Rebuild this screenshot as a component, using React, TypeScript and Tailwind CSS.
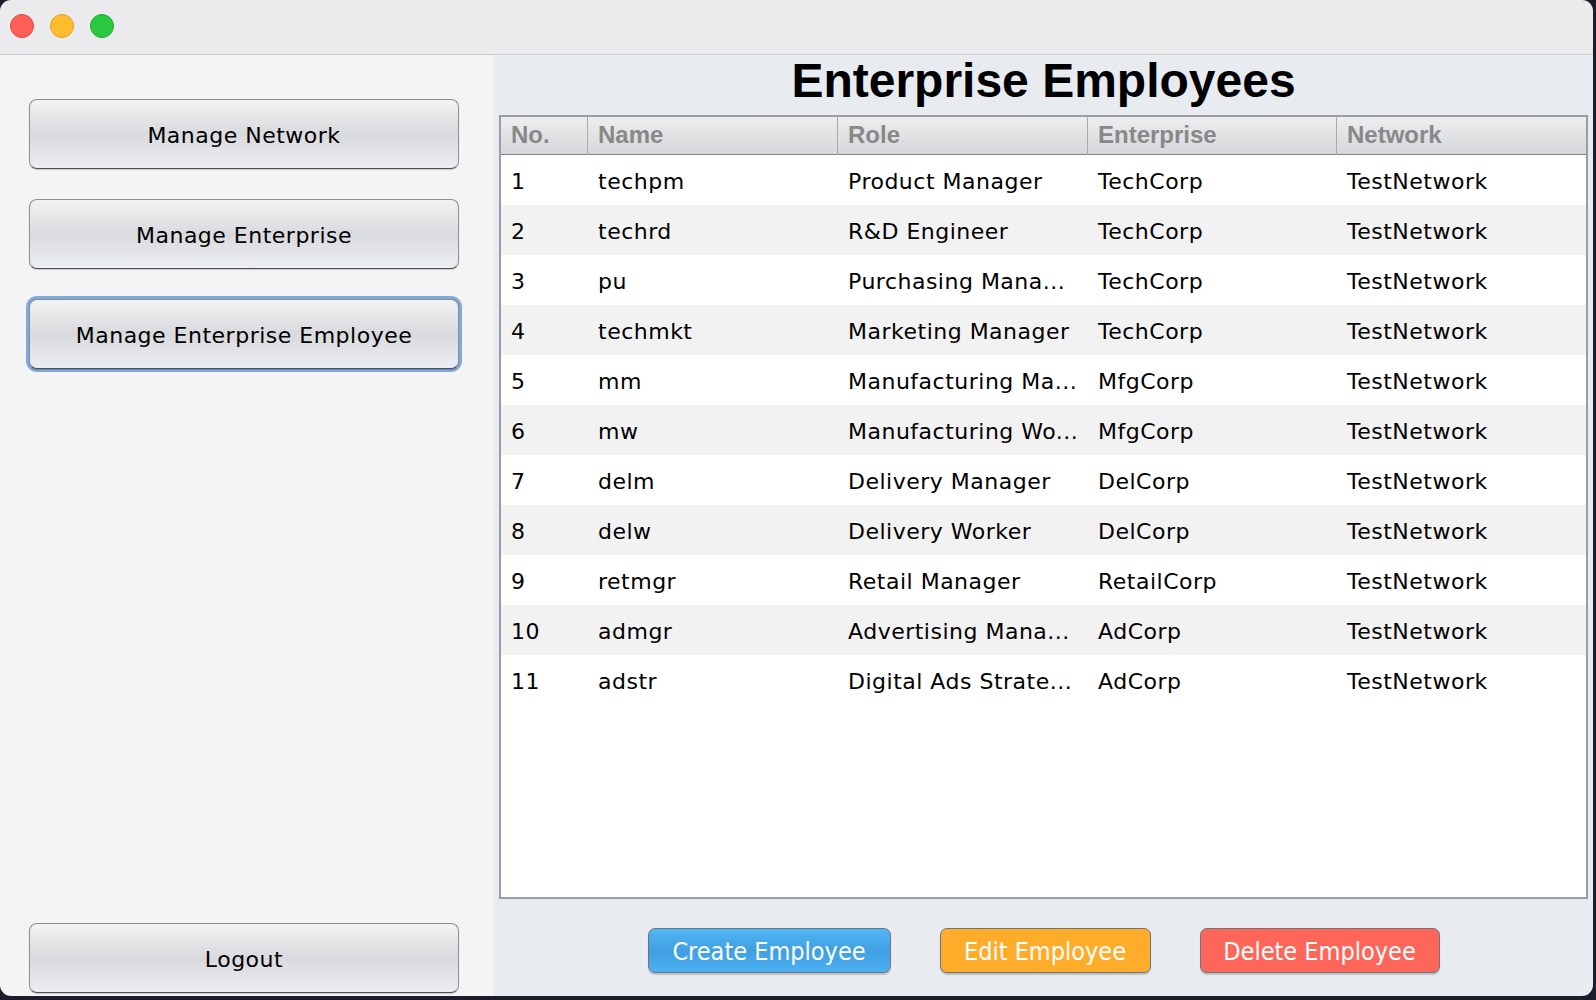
import React from 'react';

interface Employee {
  no: number;
  name: string;
  role: string;
  enterprise: string;
  network: string;
}

const employees: Employee[] = [
  { no: 1, name: 'techpm', role: 'Product Manager', enterprise: 'TechCorp', network: 'TestNetwork' },
  { no: 2, name: 'techrd', role: 'R&D Engineer', enterprise: 'TechCorp', network: 'TestNetwork' },
  { no: 3, name: 'pu', role: 'Purchasing Mana...', enterprise: 'TechCorp', network: 'TestNetwork' },
  { no: 4, name: 'techmkt', role: 'Marketing Manager', enterprise: 'TechCorp', network: 'TestNetwork' },
  { no: 5, name: 'mm', role: 'Manufacturing Ma...', enterprise: 'MfgCorp', network: 'TestNetwork' },
  { no: 6, name: 'mw', role: 'Manufacturing Wo...', enterprise: 'MfgCorp', network: 'TestNetwork' },
  { no: 7, name: 'delm', role: 'Delivery Manager', enterprise: 'DelCorp', network: 'TestNetwork' },
  { no: 8, name: 'delw', role: 'Delivery Worker', enterprise: 'DelCorp', network: 'TestNetwork' },
  { no: 9, name: 'retmgr', role: 'Retail Manager', enterprise: 'RetailCorp', network: 'TestNetwork' },
  { no: 10, name: 'admgr', role: 'Advertising Mana...', enterprise: 'AdCorp', network: 'TestNetwork' },
  { no: 11, name: 'adstr', role: 'Digital Ads Strate...', enterprise: 'AdCorp', network: 'TestNetwork' },
];

const columns = ['No.', 'Name', 'Role', 'Enterprise', 'Network'];

function SideButton({ label, focused }: { label: string; focused?: boolean }) {
  return (
    <div className={`w-fit rounded-[11px] ${focused ? 'p-[3px] bg-[#7eaadc] -m-[3px]' : ''}`}>
      <button className="w-[430px] h-[70px] pt-[3px] rounded-[8px] border-[1.5px] border-[#8e8f94] border-b-[#4f5055] bg-linear-to-b from-[#f3f3f5] via-[#d9dadd] to-[#eceef4] shadow-[0_1px_1px_rgba(0,0,0,0.18)] text-[22px] tracking-[0.5px] text-black font-['DejaVu_Sans',sans-serif] flex items-center justify-center">
        {label}
      </button>
    </div>
  );
}

function ActionButton({ label, color }: { label: string; color: 'blue' | 'orange' | 'red' }) {
  const bg =
    color === 'blue'
      ? 'bg-linear-to-b from-[#52b6f5] via-[#3f9fe2] to-[#4cb0f2] w-[243px]'
      : color === 'orange'
      ? 'bg-[#ffac2b] w-[211px]'
      : 'bg-[#ff665a] w-[240px]';
  return (
    <button
      className={`${bg} h-[45px] pt-[2px] rounded-[7px] border-[1.5px] border-[#6f747c] shadow-[0_2px_1px_rgba(0,0,0,0.18)] text-white text-[25px] font-['DejaVu_Sans_Condensed','DejaVu_Sans',sans-serif] [font-stretch:condensed] flex items-center justify-center`}
    >
      {label}
    </button>
  );
}

export default function App() {
  return (
    <div className="w-[1596px] h-[1000px] bg-[#1b1d2a] font-['DejaVu_Sans',sans-serif]">
      <div className="w-[1593px] h-[996px] rounded-[11px] overflow-hidden flex flex-col">
        {/* title bar */}
        <div className="h-[55px] shrink-0 bg-[#ebebed] border-b border-[#cdcdcf] flex items-center gap-[16px] pl-[10px] pb-[2px]">
          <span className="w-[24px] h-[24px] rounded-full bg-[#fe5f57] border border-[#e2463f]" />
          <span className="w-[24px] h-[24px] rounded-full bg-[#febc2e] border border-[#e1a116]" />
          <span className="w-[24px] h-[24px] rounded-full bg-[#28c840] border border-[#1dad2b]" />
        </div>

        <div className="flex flex-1 min-h-0">
          {/* left panel */}
          <div className="w-[494px] shrink-0 bg-[#f4f4f4] border-r border-[#eeeeee] flex flex-col pl-[29px] pt-[44px] pb-[3px]">
            <div className="flex flex-col gap-[30px]">
              <SideButton label="Manage Network" />
              <SideButton label="Manage Enterprise" />
              <SideButton label="Manage Enterprise Employee" focused />
            </div>
            <div className="mt-auto">
              <SideButton label="Logout" />
            </div>
          </div>

          {/* right panel */}
          <div className="flex-1 bg-[#e8ecf0] flex flex-col px-[5px]">
            <div className="h-[60px] pt-[2px] text-center">
              <h1 className="text-[48px] leading-none font-bold text-black font-['Liberation_Sans',Arial,sans-serif]">
                Enterprise Employees
              </h1>
            </div>

            <div className="h-[784px] border-2 border-[#9a9da4] bg-white flex flex-col">
              <div className="h-[38px] grid grid-cols-[87px_250px_250px_249px_1fr] bg-linear-to-b from-[#eeeef0] to-[#d6d7da] border-b border-[#808288]">
                {columns.map((c, i) => (
                  <div
                    key={c}
                    className={`flex items-center pl-[10px] pb-[3px] text-[24px] font-bold text-[#888889] font-['Liberation_Sans',Arial,sans-serif] ${
                      i < columns.length - 1 ? 'border-r border-[#a9aaae]' : ''
                    }`}
                  >
                    {c}
                  </div>
                ))}
              </div>
              {employees.map((e, i) => (
                <div
                  key={e.no}
                  className={`h-[50px] pt-[3px] grid grid-cols-[87px_250px_250px_249px_1fr] text-[22px] tracking-[0.5px] text-black ${
                    i % 2 === 1 ? 'bg-[#f2f2f2]' : 'bg-white'
                  }`}
                >
                  <div className="flex items-center pl-[10px]">{e.no}</div>
                  <div className="flex items-center pl-[10px]">{e.name}</div>
                  <div className="flex items-center pl-[10px]">{e.role}</div>
                  <div className="flex items-center pl-[10px]">{e.enterprise}</div>
                  <div className="flex items-center pl-[10px]">{e.network}</div>
                </div>
              ))}
            </div>

            <div className="flex justify-center gap-[49px] mt-[29px]">
              <ActionButton label="Create Employee" color="blue" />
              <ActionButton label="Edit Employee" color="orange" />
              <ActionButton label="Delete Employee" color="red" />
            </div>
          </div>
        </div>
      </div>
    </div>
  );
}
